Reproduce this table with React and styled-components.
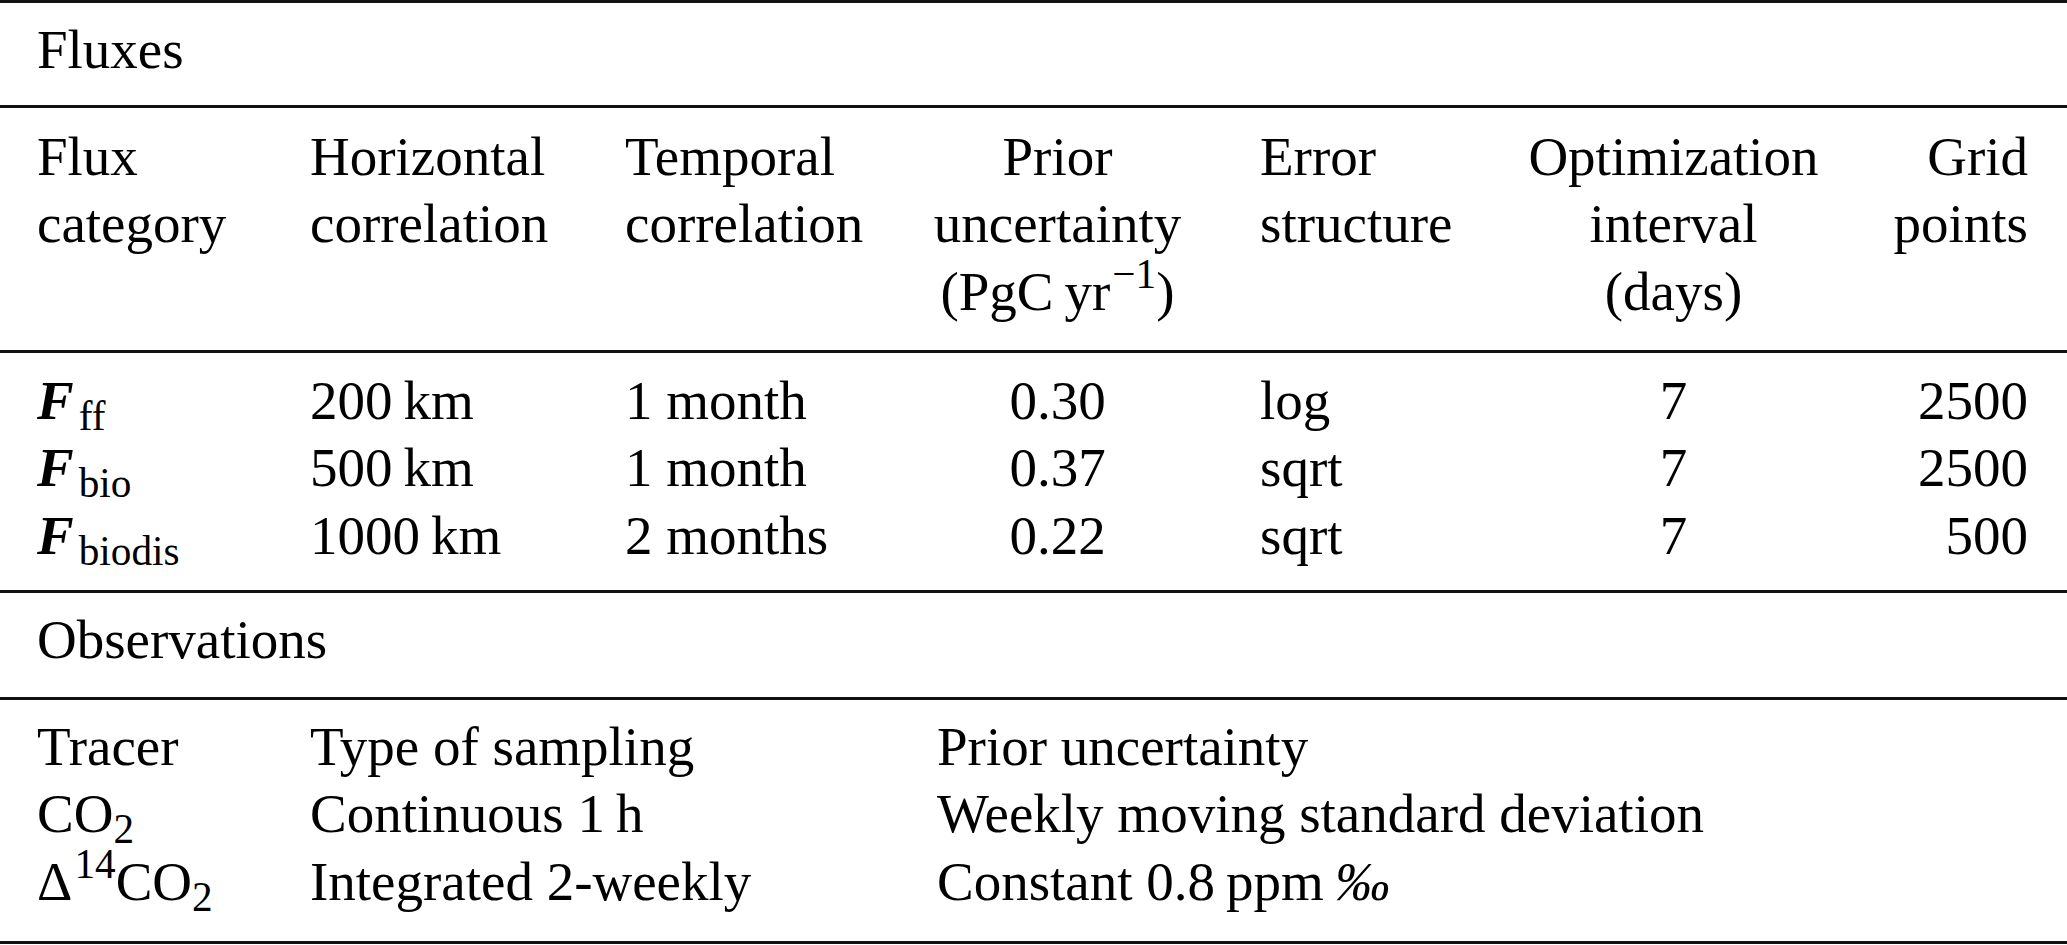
import React from 'react';
import styled, { createGlobalStyle } from 'styled-components';

const GlobalStyle = createGlobalStyle`
  html, body {
    margin: 0;
    padding: 0;
    background: #fff;
  }
`;

const FLUX_COLS = '273px 315px 230px 405px 220px 387px 161px';
const FLUX_ALIGN = ['left', 'left', 'left', 'center', 'left', 'center', 'right'];
const OBS_COLS = '273px 627px 1fr';

const fluxRows = [
  { name: 'ff', horiz: '200', temp: '1 month', unc: '0.30', err: 'log', opt: '7', grid: '2500' },
  { name: 'bio', horiz: '500', temp: '1 month', unc: '0.37', err: 'sqrt', opt: '7', grid: '2500' },
  { name: 'biodis', horiz: '1000', temp: '2 months', unc: '0.22', err: 'sqrt', opt: '7', grid: '500' },
];

const Sub = ({ children }) => <SubText>{children}</SubText>;

const FluxName = ({ name }) => (
  <>
    <BoldF>F</BoldF>
    <SubText>{name}</SubText>
  </>
);

const Table = () => {
  const fluxHeads = [
    ['Flux', 'category'],
    ['Horizontal', 'correlation'],
    ['Temporal', 'correlation'],
    [
      'Prior',
      'uncertainty',
      <>
        (PgC{'\u2009'}yr<SupText>{'\u22121'}</SupText>)
      </>,
    ],
    ['Error', 'structure'],
    ['Optimization', 'interval', '(days)'],
    ['Grid', 'points'],
  ];

  return (
    <Page>
      <Section $pt={13} $pb={21.5}>
        <Title>Fluxes</Title>
      </Section>

      <Section $pt={14.7} $pb={24.8}>
        <Grid $cols={FLUX_COLS}>
          {fluxHeads.map((lines, i) => (
            <Cell key={i} $align={FLUX_ALIGN[i]}>
              {lines.map((l, j) => (
                <Line key={j}>{l}</Line>
              ))}
            </Cell>
          ))}
        </Grid>
      </Section>

      <Section $pt={13.7} $pb={20.8}>
        <Grid $cols={FLUX_COLS}>
          {fluxRows.map((r) =>
            [
              <FluxName name={r.name} />,
              `${r.horiz}\u2009km`,
              r.temp,
              r.unc,
              r.err,
              r.opt,
              r.grid,
            ].map((v, i) => (
              <Cell key={r.name + i} $align={FLUX_ALIGN[i]}>
                {v}
              </Cell>
            ))
          )}
        </Grid>
      </Section>

      <Section $pt={12.7} $pb={23.8}>
        <Title>Observations</Title>
      </Section>

      <Section $pt={12.7} $pb={25.8} $last>
        <Grid $cols={OBS_COLS}>
          <Cell>Tracer</Cell>
          <Cell>Type of sampling</Cell>
          <Cell>Prior uncertainty</Cell>

          <Cell>
            CO<Sub>2</Sub>
          </Cell>
          <Cell>Continuous 1{'\u2009'}h</Cell>
          <Cell>Weekly moving standard deviation</Cell>

          <Cell>
            {'\u0394'}
            <SupText>14</SupText>CO<Sub>2</Sub>
          </Cell>
          <Cell>Integrated 2-weekly</Cell>
          <Cell>
            Constant 0.8{'\u2009'}ppm{'\u2009'}
            <Permil>{'\u2030'}</Permil>
          </Cell>
        </Grid>
      </Section>
    </Page>
  );
};

export default function App() {
  return (
    <>
      <GlobalStyle />
      <Table />
    </>
  );
}

const Page = styled.div`
  width: 2067px;
  background: #fff;
  color: #000;
  font-family: 'Liberation Serif', 'Times New Roman', serif;
  font-size: 55px;
  line-height: 67.5px;
`;

const Section = styled.div`
  border-top: 3px solid #111;
  border-bottom: ${(p) => (p.$last ? '3px solid #111' : 'none')};
  padding: ${(p) => p.$pt}px 39px ${(p) => p.$pb}px 37px;
`;

const Title = styled.div`
  white-space: nowrap;
`;

const Grid = styled.div`
  display: grid;
  grid-template-columns: ${(p) => p.$cols};
`;

const Cell = styled.div`
  text-align: ${(p) => p.$align || 'left'};
  white-space: nowrap;
`;

const Line = styled.div``;

const BoldF = styled.span`
  font-weight: bold;
  font-style: italic;
  margin-right: 5px;
`;

const SubText = styled.span`
  font-size: 0.75em;
  line-height: 0;
  vertical-align: -11px;
`;

const SupText = styled.span`
  font-size: 0.75em;
  line-height: 0;
  vertical-align: 22px;
  margin-left: 2px;
`;

const Permil = styled.span`
  font-style: italic;
`;
